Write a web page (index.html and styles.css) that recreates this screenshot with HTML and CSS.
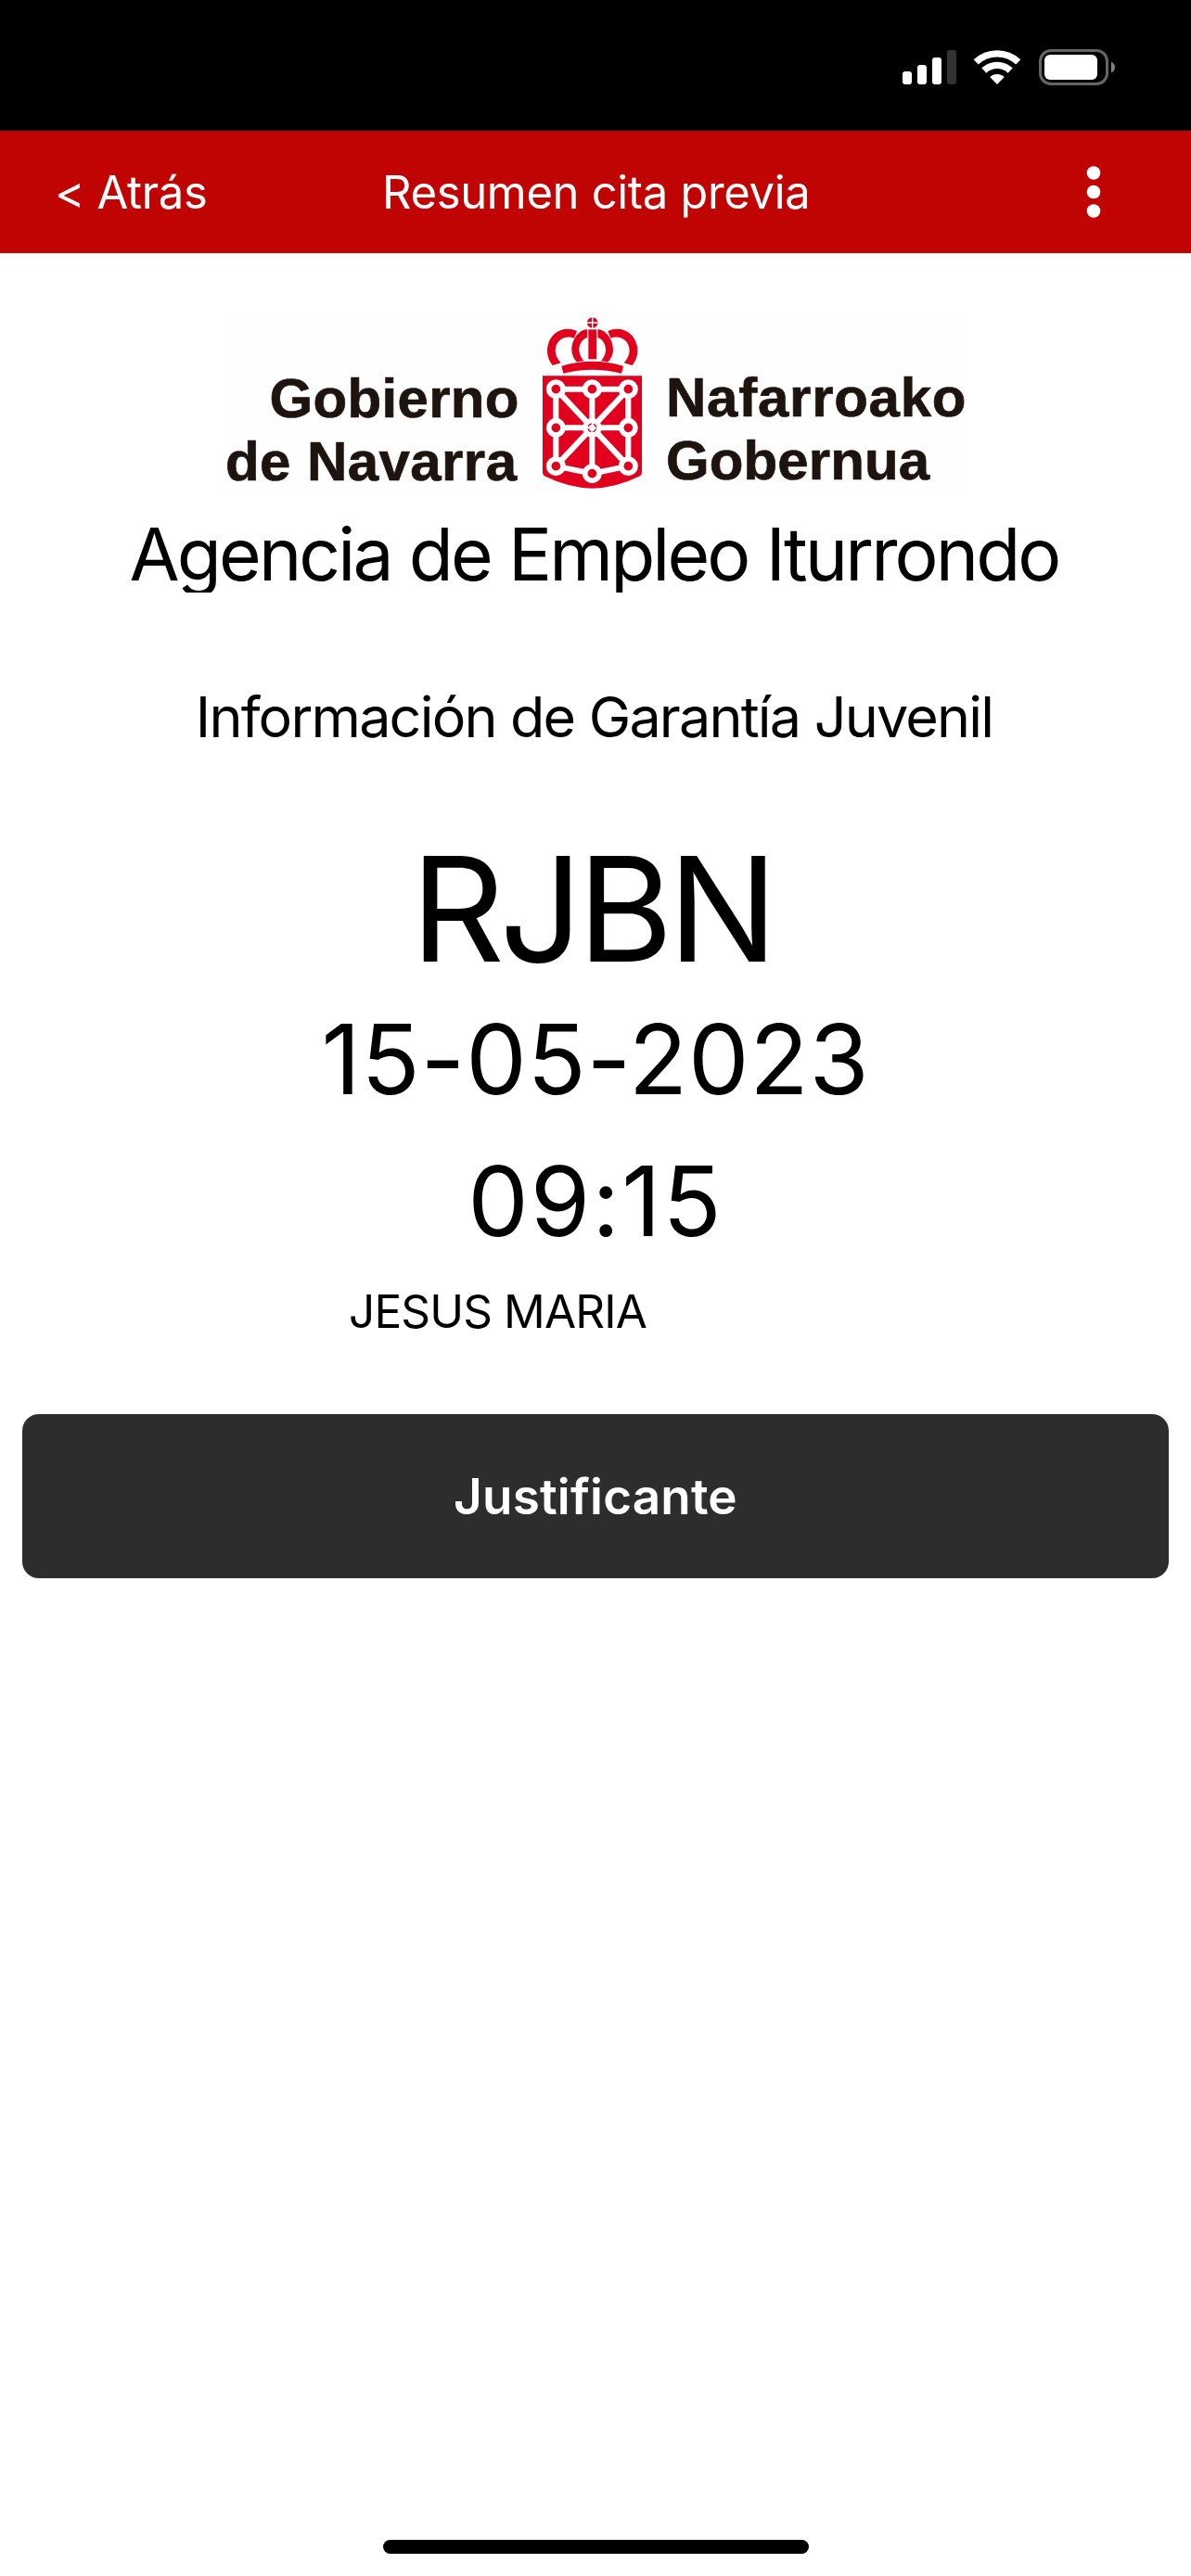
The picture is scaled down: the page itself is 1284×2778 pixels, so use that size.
FILE: index.html
```html
<html>
  <head>
    <title>Resumen cita previa</title>
    <meta charset="utf-8">
    <link rel="stylesheet" href="styles.css">
  </head>
  <body>
    <div class="status-bar">
      <svg class="signal" width="58" height="37" viewBox="0 0 58 37">
        <rect x="0" y="23" width="10" height="14" rx="3"/>
        <rect x="16" y="16" width="10" height="21" rx="3"/>
        <rect x="32" y="8" width="10" height="29" rx="3"/>
        <rect x="48" y="0" width="10" height="37" rx="3" fill="#333"/>
      </svg>
      <svg class="wifi" width="52" height="37" viewBox="0 0 52 37">
        <path d="M3.2 12.9A33.2 33.2 0 0 1 48.8 12.9M11.8 22A20.7 20.7 0 0 1 40.2 22" fill="none" stroke="#fff" stroke-width="7.4"/>
        <path d="M26 37L18.2 29A11.3 11.3 0 0 1 33.8 29Z"/>
      </svg>
      <svg class="battery" width="82" height="39" viewBox="0 0 82 39">
        <rect x="1.5" y="1.5" width="72" height="36" rx="11.5" fill="none" stroke="#666" stroke-width="3"/>
        <rect x="6" y="6" width="57" height="27" rx="6"/>
        <path d="M78 13.5Q82 15.5 82 19.5T78 25.5Z" fill="#808080"/>
      </svg>
    </div>

    <div class="header">
      <a class="back">&lt; Atrás</a>
      <span class="title">Resumen cita previa</span>
      <svg class="menu" width="16" height="56" viewBox="0 0 16 56">
        <circle cx="8" cy="7.5" r="7.3"/>
        <circle cx="8" cy="28" r="7.3"/>
        <circle cx="8" cy="48.5" r="7.3"/>
      </svg>
    </div>

    <div class="content">
      <svg class="logo" width="798" height="190" viewBox="0 0 798 190">
        <g class="logo-text">
          <text x="47.5" y="107.7" textLength="269">Gobierno</text>
          <text x="0" y="176" textLength="314">de Navarra</text>
          <text x="475" y="107" textLength="323.5">Nafarroako</text>
          <text x="475" y="175" textLength="284">Gobernua</text>
        </g>
        <g transform="translate(327 -12) scale(.33333)">
          <!-- crown -->
          <g fill="#e2001f">
            <circle cx="206" cy="54" r="17.5"/>
            <path d="M77 192C62 174 57 150 62 127C72 84 115 62 156 81L147 104C121 94 92 107 87 136C84 154 91 170 104 184Z"/>
            <path d="M335 192C350 174 355 150 350 127C340 84 297 62 256 81L265 104C291 94 320 107 325 136C328 154 321 170 308 184Z"/>
            <path d="M155 181C145 169 139 157 139 142C139 107 164 76 189 76V102C173 108 163 122 163 142C163 155 169 167 178 178Z"/>
            <path d="M257 181C267 169 273 157 273 142C273 107 248 76 223 76V102C239 108 249 122 249 142C249 155 243 167 234 178Z"/>
            <path d="M193 76H219V172H193Z"/>
            <path d="M106 194Q206 165 306 194L300 218Q206 194 112 218Z"/>
            <path d="M45 226H366V538Q366 548 357 551Q284 587 206 590Q126 587 54 551Q45 548 45 538Z"/>
          </g>
          <path d="M206 37V72M189 54H223" stroke="#fff" stroke-width="4"/>
          <!-- chains -->
          <g fill="none" stroke="#fff" stroke-width="18">
            <path d="M88 269H322V518L205 542L88 518Z"/>
            <path d="M88 269L322 518M322 269L88 518M205 269V542M88 394H322"/>
          </g>
          <g fill="#e2001f" stroke="#fff" stroke-width="17">
            <circle cx="88" cy="269" r="23"/>
            <circle cx="205" cy="269" r="23"/>
            <circle cx="322" cy="269" r="23"/>
            <circle cx="88" cy="394" r="23"/>
            <circle cx="322" cy="394" r="23"/>
            <circle cx="88" cy="518" r="23"/>
            <circle cx="205" cy="542" r="23"/>
            <circle cx="322" cy="518" r="23"/>
          </g>
          <circle cx="205" cy="394" r="31" fill="#fff"/>
          <circle cx="205" cy="394" r="13" fill="none" stroke="#e2001f" stroke-width="4" stroke-dasharray="14 6.42" stroke-dashoffset="-3.2"/>
        </g>
      </svg>
      <div class="office">Agencia de Empleo Iturrondo</div>
      <div class="service">Información de Garantía Juvenil</div>
      <div class="code">RJBN</div>
      <div class="date">15-05-2023</div>
      <div class="time">09:15</div>
      <div class="name">JESUS MARIA</div>
      <button class="receipt">Justificante</button>
    </div>

    <div class="home-bar"></div>
  </body>
</html>
```
FILE: styles.css
```css
* {
  box-sizing: border-box;
}
body {
  margin: 0;
  height: 2778px;
  display: flex;
  flex-direction: column;
  background-color: #fff;
  color: #000;
  font-family: Inter, "Liberation Sans", sans-serif;
}
.status-bar {
  height: 141px;
  padding: 53px 82px 0 0;
  display: flex;
  justify-content: flex-end;
  background-color: #000;
  fill: #fff;
}
.signal {
  margin: 1px 18px 0 0;
}
.wifi {
  margin: 1px 19px 0 0;
}
.header {
  height: 132px;
  padding: 0 97px 0 59px;
  display: flex;
  align-items: center;
  background-color: #c00303;
  color: #fff;
  fill: #fff;
  font-size: 49px;
  letter-spacing: -.35px;
}
.back {
  width: 353px;
}
.menu {
  margin-left: auto;
}
.content {
  flex: 1;
  padding: 69px 24px 0;
  display: flex;
  flex-direction: column;
  align-items: center;
  white-space: nowrap;
}
.logo {
  background-color: #fefefe;
}
.logo-text {
  font: bold 60px "Liberation Sans", sans-serif;
  fill: #1e140f;
  stroke: #1e140f;
  stroke-width: .7px;
}
.office {
  margin: 24px 3px 0 0;
  height: 83px;
  line-height: 83px;
  font-size: 78.5px;
  letter-spacing: -2.9px;
  overflow: hidden;
}
.service {
  margin: 94px 3px 0 0;
  line-height: 80px;
  font-size: 61px;
  letter-spacing: -1.8px;
}
.code {
  margin: 77px 8px 0 0;
  line-height: 180px;
  font-size: 157px;
  letter-spacing: -5.4px;
}
.date {
  line-height: 144px;
  font-size: 104px;
  letter-spacing: .8px;
}
.time {
  line-height: 162px;
  font-size: 104px;
  letter-spacing: 2px;
}
.name {
  align-self: flex-start;
  margin-left: 352px;
  line-height: 76px;
  font-size: 49.5px;
  letter-spacing: -.86px;
}
.receipt {
  width: 100%;
  height: 177px;
  margin-top: 73px;
  border: 0;
  border-radius: 18px;
  background-color: #2d2d2d;
  color: #fff;
  font-family: inherit;
  font-size: 53px;
  font-weight: 600;
  letter-spacing: .2px;
}
.home-bar {
  width: 459px;
  height: 15px;
  margin: 0 auto 24px;
  border-radius: 8px;
  background-color: #000;
}
```
